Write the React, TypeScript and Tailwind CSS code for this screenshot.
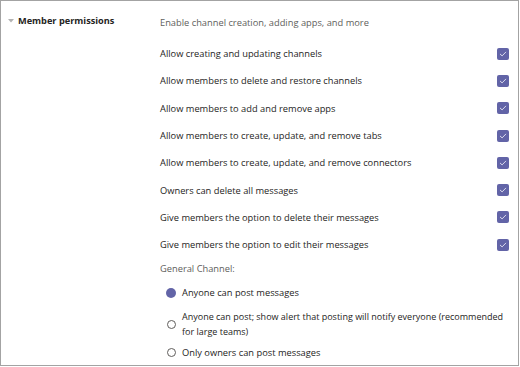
import React from "react";

const permissions = [
  "Allow creating and updating channels",
  "Allow members to delete and restore channels",
  "Allow members to add and remove apps",
  "Allow members to create, update, and remove tabs",
  "Allow members to create, update, and remove connectors",
  "Owners can delete all messages",
  "Give members the option to delete their messages",
  "Give members the option to edit their messages",
];

function Checkbox() {
  return (
    <div className="w-[12px] h-[12px] rounded-[2px] bg-[#6264a7] flex items-center justify-center">
      <svg width="8" height="8" viewBox="0 0 8 8" fill="none">
        <path d="M1.3 4.2 L3.1 5.9 L6.7 2.2" stroke="#e8e8f4" strokeWidth="0.9" strokeLinecap="round" strokeLinejoin="round" />
      </svg>
    </div>
  );
}

function Radio({ checked }: { checked?: boolean }) {
  return checked ? (
    <div className="w-[10px] h-[10px] rounded-full bg-[#6264a7]" />
  ) : (
    <div className="w-[9px] h-[9px] rounded-full border border-[#605e5c] bg-white" />
  );
}

export default function App() {
  return (
    <div
      className="w-[519px] h-[366px] bg-white border-[1.5px] border-[#a3a3a3] overflow-hidden text-[#252423] flex"
      style={{ fontFamily: '"Segoe UI", "Open Sans", "Noto Sans", sans-serif' }}
    >
      {/* Left column */}
      <div className="w-[159px] shrink-0 pt-[12px] pl-[3px] flex items-start">
        <div className="w-[14px] h-[15px] flex items-center justify-center">
          <svg width="6" height="4" viewBox="0 0 6 4">
            <path d="M0 0 L6 0 L3 3.5 Z" fill="#b3b3b3" />
          </svg>
        </div>
        <span className="text-[9.2px] leading-[15px] font-bold">Member permissions</span>
      </div>

      {/* Right column */}
      <div className="flex-1 pt-[14px] pr-[9px] flex flex-col text-[9.3px] leading-[15px]">
        <div className="text-[#605e5c]">Enable channel creation, adding apps, and more</div>

        <div className="mt-[10px] flex flex-col">
          {permissions.map((p) => (
            <div key={p} className="h-[27.3px] flex items-center justify-between">
              <span>{p}</span>
              <Checkbox />
            </div>
          ))}
        </div>

        <div className="mt-[3px] text-[#605e5c]">General Channel:</div>

        <div className="mt-[9px] flex flex-col">
          <div className="flex items-center">
            <div className="w-[22px] pl-[6px] flex items-center">
              <Radio checked />
            </div>
            <span>Anyone can post messages</span>
          </div>
          <div className="mt-[9px] flex items-center">
            <div className="w-[22px] pl-[7px] flex items-center">
              <Radio />
            </div>
            <span className="whitespace-nowrap text-[9px]">
              Anyone can post; show alert that posting will notify everyone (recommended
              <br />
              for large teams)
            </span>
          </div>
          <div className="mt-[6px] flex items-center">
            <div className="w-[22px] pl-[7px] flex items-center">
              <Radio />
            </div>
            <span>Only owners can post messages</span>
          </div>
        </div>
      </div>
    </div>
  );
}
